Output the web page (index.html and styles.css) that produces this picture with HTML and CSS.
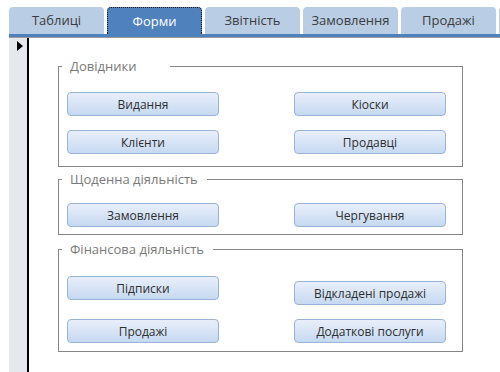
FILE: index.html
```html
<!DOCTYPE html>
<html lang="uk">
<head>
    <meta charset="UTF-8">
    <title>Форми</title>
    <link rel="stylesheet" href="styles.css">
</head>
<body>

<div class="tabs">
    <div class="tab">Таблиці</div>
    <div class="tab active">Форми</div>
    <div class="tab">Звітність</div>
    <div class="tab">Замовлення</div>
    <div class="tab">Продажі</div>
    <div class="tab stub"></div>
</div>
<div class="tabbar"></div>

<div class="main">
    <div class="selector">
        <span class="arrow"></span>
    </div>
    <div class="content">
        <fieldset class="group g1">
            <legend class="wide">Довідники</legend>
            <div class="buttons">
                <button>Видання</button>
                <button>Кіоски</button>
                <button>Клієнти</button>
                <button>Продавці</button>
            </div>
        </fieldset>

        <fieldset class="group g2">
            <legend>Щоденна діяльність</legend>
            <div class="buttons">
                <button>Замовлення</button>
                <button>Чергування</button>
            </div>
        </fieldset>

        <fieldset class="group g3">
            <legend>Фінансова діяльність</legend>
            <div class="buttons">
                <button>Підписки</button>
                <button class="lower">Відкладені продажі</button>
                <button>Продажі</button>
                <button>Додаткові послуги</button>
            </div>
        </fieldset>
    </div>
</div>

</body>
</html>
```

FILE: styles.css
```css
*{
    margin: 0;
    padding: 0;
    box-sizing: border-box;
}

body{
    background: #fff;
    padding-left: 9px;
    font-family: 'Open Sans', 'Noto Sans', sans-serif;
    height: 372px;
    overflow: hidden;
}

.tabs{
    display: flex;
    gap: 3px;
    padding-top: 7px;
}

.tab{
    width: 95px;
    height: 27px;
    flex-shrink: 0;
    background: #b9cde5;
    border-radius: 4px 4px 0 0;
    color: #3c3c3c;
    font-size: 13px;
    line-height: 27px;
    text-align: center;
}

.tab.active{
    background: #4f81bd;
    color: #fff;
    border: 1px dotted #1a1a1a;
    border-bottom: 0;
    line-height: 26px;
}

.tab.stub{
    width: 10px;
}

.tabbar{
    height: 4px;
    background: #4f81bd;
    border-bottom: 1px solid #9a9a9a;
}

.main{
    display: flex;
    height: 334px;
}

.selector{
    width: 20px;
    background: #e6e8ed;
    border-right: 2px solid #000;
    padding: 3px 0 0 8px;
}

.arrow{
    display: block;
    width: 0;
    height: 0;
    border-top: 5px solid transparent;
    border-bottom: 5px solid transparent;
    border-left: 6px solid #000;
}

.content{
    padding: 19px 0 0 29px;
}

.group{
    width: 405px;
    border: 1px solid #858585;
    padding: 0 0 12px 8px;
}

.group legend{
    margin-left: -5px;
    padding: 0 9px 0 8px;
    color: #7a7a7a;
    font-size: 13px;
    line-height: 18px;
}

.group legend.wide{
    width: 108px;
}

.buttons{
    display: grid;
    grid-template-columns: 152px 152px;
    column-gap: 75px;
    row-gap: 14px;
    align-items: start;
}

.buttons button{
    height: 24px;
    border: 1px solid #98b4d8;
    border-radius: 4px;
    background: linear-gradient(#e9effa, #c6d9f1);
    color: #2e2e2e;
    font-family: 'Open Sans', 'Noto Sans', sans-serif;
    font-size: 12px;
}

.g1{
    padding-top: 17px;
}

.g2{
    margin-top: 3px;
    padding-top: 15px;
    padding-bottom: 7px;
}

.g3{
    margin-top: 5px;
    padding-top: 18px;
    padding-bottom: 8px;
}

.g3 .lower{
    margin-top: 5px;
}
```
